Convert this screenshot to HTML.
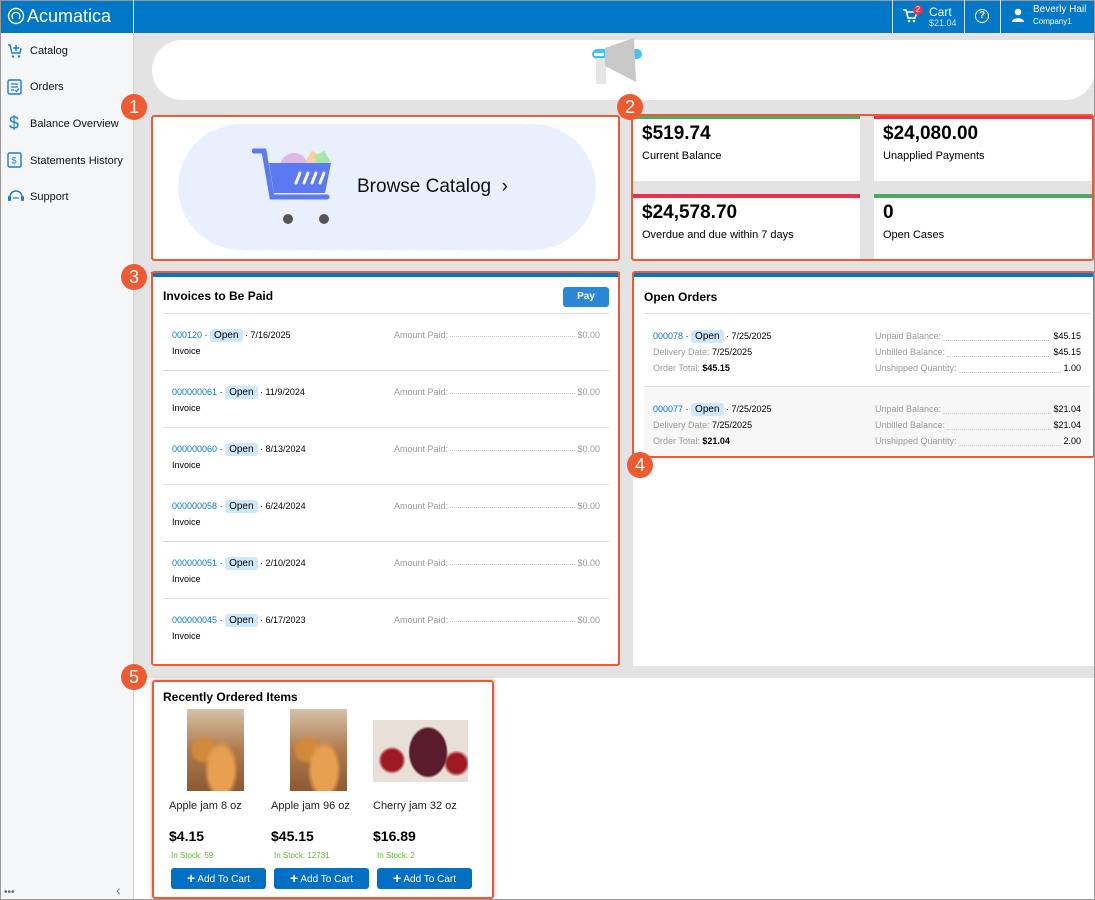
<!DOCTYPE html>
<html><head><meta charset="utf-8"><style>
*{box-sizing:border-box;margin:0;padding:0}
body{width:1095px;height:900px;overflow:hidden;font-family:"Liberation Sans",Arial,sans-serif;background:#fff;position:relative;color:#000}
.a{position:absolute}
.hdr{left:0;top:0;width:1095px;height:33px;background:#0078c8;border:1px solid #999;border-bottom:none}
.side{left:0;top:33px;width:134px;height:867px;background:#f4f6f8;border-right:1px solid #d0d0d0;border-left:1px solid #999;border-bottom:1px solid #999}
.nav{position:absolute;left:29px;font-size:11px;color:#111}
.ic{position:absolute;left:6px}
.main{left:134px;top:33px;width:961px;height:645px;background:#e3e3e3}
.badge{position:absolute;width:26px;height:26px;border-radius:50%;background:#f05a30;color:#fff;font-size:18px;text-align:center;line-height:26px}
.ob{border:2px solid #f05a30;border-radius:3px;position:absolute}
.card{position:absolute;background:#fff;border-top:4px solid;padding:3px 9px}
.card b{font-size:19px;display:block;line-height:24px}
.card span{font-size:11px}
.link{color:#0a76c6}
.pill{display:inline-block;background:#cde8fb;border-radius:3px;padding:0 4px;font-size:10px;line-height:13px;color:#000}
.dots{flex:1;border-bottom:1px dotted #ccc;margin:0 2px 3px}
.lbl{color:#999}
.btn{position:absolute;background:#0070c4;color:#fff;font-size:10px;border-radius:3px;text-align:center}
.ir{position:absolute;width:428px}
.ir .amt{position:absolute;left:222px;top:1px;width:206px;display:flex}
.hl{position:absolute;left:163px;width:446px;height:1px;background:#ddd}
</style></head><body>
<div class="a hdr"></div>
<svg class="a" style="left:7px;top:7px" width="18" height="18"><circle cx="9" cy="9" r="7.5" fill="none" stroke="#fff" stroke-width="1.4"/><path d="M6 12a4 4 0 1 1 6 0" fill="none" stroke="#fff" stroke-width="1.2"/></svg>
<div class="a" style="left:27px;top:6px;color:#fff;font-size:18px">Acumatica</div>
<div class="a" style="left:133px;top:0;width:1px;height:33px;background:#fff"></div>
<div class="a" style="left:892px;top:0;width:1px;height:33px;background:#cfe3f3"></div>
<div class="a" style="left:964px;top:0;width:1px;height:33px;background:#cfe3f3"></div>
<div class="a" style="left:1000px;top:0;width:1px;height:33px;background:#cfe3f3"></div>
<svg class="a" style="left:902px;top:9px" width="16" height="14" viewBox="0 0 16 14"><path d="M1 1h3l2 8h7l2-6H5" fill="none" stroke="#fff" stroke-width="1.6"/><circle cx="7" cy="12" r="1.3" fill="#fff"/><circle cx="12" cy="12" r="1.3" fill="#fff"/></svg>
<div class="a" style="left:913px;top:5px;width:10px;height:10px;border-radius:50%;background:#e8334a;color:#fff;font-size:8px;text-align:center;line-height:10px">2</div>
<div class="a" style="left:929px;top:5px;color:#fff;font-size:12px">Cart</div>
<div class="a" style="left:929px;top:18px;color:#cfe6f7;font-size:9px">$21.04</div>
<div class="a" style="left:975px;top:9px;width:14px;height:14px;border:1.6px solid #fff;border-radius:50%;color:#fff;font-size:10px;font-weight:bold;text-align:center;line-height:11px">?</div>
<svg class="a" style="left:1011px;top:8px" width="14" height="14"><circle cx="7" cy="4" r="3.3" fill="#fff"/><path d="M1 14c0-5 12-5 12 0z" fill="#fff"/></svg>
<div class="a" style="left:1033px;top:4px;color:#fff;font-size:10px">Beverly Hail</div>
<div class="a" style="left:1033px;top:17px;color:#fff;font-size:8px">Company1</div>

<div class="a side">
<svg class="ic" style="top:10px" width="16" height="16" viewBox="0 0 16 16"><path d="M1 2h2l2 8h8l1-5" fill="none" stroke="#1a7fd0" stroke-width="1.4"/><path d="M9 2v6M6 5h6" stroke="#1a7fd0" stroke-width="1.4"/><circle cx="6" cy="13.5" r="1.2" fill="#1a7fd0"/><circle cx="12" cy="13.5" r="1.2" fill="#1a7fd0"/></svg>
<div class="nav" style="top:12px">Catalog</div>
<svg class="ic" style="top:46px" width="15" height="16"><rect x="1" y="1" width="13" height="14" rx="1.5" fill="none" stroke="#1a7fd0" stroke-width="1.4"/><path d="M4 5h7M4 8h7M4 11h3M8 11l1.5 1.5 2.5-3" stroke="#1a7fd0" stroke-width="1.2" fill="none"/></svg>
<div class="nav" style="top:48px">Orders</div>
<div class="ic" style="top:80px;left:8px;color:#1a7fd0;font-size:18px">$</div>
<div class="nav" style="top:85px">Balance Overview</div>
<svg class="ic" style="top:119px" width="15" height="16"><rect x="1" y="1" width="13" height="14" rx="1.5" fill="none" stroke="#1a7fd0" stroke-width="1.4"/><text x="4.5" y="11.5" font-size="9" fill="#1a7fd0" font-family="Liberation Sans">$</text></svg>
<div class="nav" style="top:122px">Statements History</div>
<svg class="ic" style="top:156px" width="18" height="14"><path d="M3 8a6 6 0 0 1 12 0" fill="none" stroke="#1a7fd0" stroke-width="1.4"/><rect x="1" y="7" width="3" height="5" rx="1" fill="#1a7fd0"/><rect x="14" y="7" width="3" height="5" rx="1" fill="#1a7fd0"/><circle cx="7" cy="9" r=".9" fill="#1a7fd0"/><circle cx="9" cy="9" r=".9" fill="#1a7fd0"/><circle cx="11" cy="9" r=".9" fill="#1a7fd0"/></svg>
<div class="nav" style="top:158px">Support</div>
<div class="a" style="left:3px;top:854px;color:#666;font-size:10px">•••</div>
<div class="a" style="left:115px;top:849px;color:#777;font-size:14px">‹</div>
</div>

<div class="a main"></div>
<div class="a" style="left:152px;top:40px;width:943px;height:60px;background:#fff;border-radius:30px 0 30px 30px"></div>
<svg class="a" style="left:590px;top:38px" width="56" height="48"><rect x="2" y="11" width="50" height="10" rx="5" fill="#3ec4f5"/><rect x="4" y="15" width="10" height="3" fill="#fff"/><rect x="6" y="20" width="10" height="26" fill="#e6e6e6"/><path d="M15 10 L44 0 L46 44 L15 28z" fill="#c8c8c8"/></svg>

<div class="a" style="left:151px;top:115px;width:469px;height:146px;background:#fff"></div>
<svg class="a" style="left:175px;top:121px" width="424" height="132" viewBox="0 0 424 132"><defs><pattern id="w" width="12" height="12" patternUnits="userSpaceOnUse"></pattern></defs>
<rect x="6" y="6" width="412" height="120" rx="60" fill="#e9effc" stroke="#e9effc" stroke-width="6" stroke-dasharray="5 4" stroke-linecap="round"/></svg>
<svg class="a" style="left:252px;top:147px" width="90" height="80"><circle cx="42" cy="20" r="14" fill="#e0b8e8"/><rect x="56" y="6" width="12" height="12" fill="#f9cf9b" transform="rotate(30 62 12)"/><rect x="64" y="6" width="12" height="12" fill="#a6e6a6" transform="rotate(-30 70 12)"/><path d="M2 4h10l8 46h55" fill="none" stroke="#5a79f2" stroke-width="5" stroke-linecap="round"/><path d="M17 16h62l-6 30H22z" fill="#5a79f2"/><path d="M44 36l4-10M52 36l4-10M60 36l4-10M68 36l4-10" stroke="#fff" stroke-width="3" stroke-linecap="round"/><circle cx="36" cy="72" r="5" fill="#555"/><circle cx="72" cy="72" r="5" fill="#555"/></svg>
<div class="a" style="left:357px;top:176px;font-size:19px;color:#111">Browse Catalog &nbsp;›</div>
<div class="ob" style="left:151px;top:115px;width:469px;height:146px"></div>

<div class="card" style="left:633px;top:115px;width:227px;height:66px;border-color:#4caa5e"><b>$519.74</b><span>Current Balance</span></div>
<div class="card" style="left:874px;top:115px;width:219px;height:66px;border-color:#e8334a"><b>$24,080.00</b><span>Unapplied Payments</span></div>
<div class="card" style="left:633px;top:194px;width:227px;height:66px;border-color:#e8334a"><b>$24,578.70</b><span>Overdue and due within 7 days</span></div>
<div class="card" style="left:874px;top:194px;width:219px;height:66px;border-color:#4caa5e"><b>0</b><span>Open Cases</span></div>
<div class="ob" style="left:631px;top:114px;width:463px;height:147px"></div>

<div class="a" style="left:151px;top:272px;width:469px;height:394px;background:#fff;border-top:5px solid #0078c8"></div>
<div class="a" style="left:163px;top:289px;font-size:12px;font-weight:bold">Invoices to Be Paid</div>
<div class="btn" style="left:563px;top:287px;width:46px;height:20px;line-height:20px;font-weight:bold;background:#2a86d6">Pay</div>
<div class="hl" style="top:313px"></div>
<div class="hl" style="top:370px"></div>
<div class="hl" style="top:427px"></div>
<div class="hl" style="top:484px"></div>
<div class="hl" style="top:541px"></div>
<div class="hl" style="top:598px"></div>
<div class="a" style="left:172px;top:329px;width:428px;font-size:9px">
 <div class="ir" style="top:0"><span class="link">000120</span> · <span class="pill">Open</span> · 7/16/2025<div style="margin-top:4px">Invoice</div><div class="amt lbl">Amount Paid:<span class="dots"></span>$0.00</div></div>
 <div class="ir" style="top:57px"><span class="link">000000061</span> · <span class="pill">Open</span> · 11/9/2024<div style="margin-top:4px">Invoice</div><div class="amt lbl">Amount Paid:<span class="dots"></span>$0.00</div></div>
 <div class="ir" style="top:114px"><span class="link">000000060</span> · <span class="pill">Open</span> · 8/13/2024<div style="margin-top:4px">Invoice</div><div class="amt lbl">Amount Paid:<span class="dots"></span>$0.00</div></div>
 <div class="ir" style="top:171px"><span class="link">000000058</span> · <span class="pill">Open</span> · 6/24/2024<div style="margin-top:4px">Invoice</div><div class="amt lbl">Amount Paid:<span class="dots"></span>$0.00</div></div>
 <div class="ir" style="top:228px"><span class="link">000000051</span> · <span class="pill">Open</span> · 2/10/2024<div style="margin-top:4px">Invoice</div><div class="amt lbl">Amount Paid:<span class="dots"></span>$0.00</div></div>
 <div class="ir" style="top:285px"><span class="link">000000045</span> · <span class="pill">Open</span> · 6/17/2023<div style="margin-top:4px">Invoice</div><div class="amt lbl">Amount Paid:<span class="dots"></span>$0.00</div></div>
</div>
<div class="ob" style="left:151px;top:271px;width:469px;height:395px"></div>

<div class="a" style="left:633px;top:272px;width:461px;height:394px;background:#fff;border-top:5px solid #0078c8"></div>
<div class="a" style="left:644px;top:290px;font-size:12px;font-weight:bold">Open Orders</div>
<div class="a" style="left:644px;top:313px;width:446px;height:1px;background:#ddd"></div>
<div class="a" style="left:644px;top:386px;width:446px;height:70px;background:#f7f7f7;border-top:1px solid #ddd"></div>
<div class="a" style="left:653px;top:328px;font-size:9px;line-height:16px">
 <div><span class="link">000078</span> · <span class="pill">Open</span> · 7/25/2025</div>
 <div><span class="lbl">Delivery Date:</span> 7/25/2025</div>
 <div><span class="lbl">Order Total:</span> <b>$45.15</b></div>
</div>
<div class="a" style="left:875px;top:328px;width:206px;font-size:9px;line-height:16px">
 <div style="display:flex"><span class="lbl">Unpaid Balance:</span><span class="dots"></span>$45.15</div>
 <div style="display:flex"><span class="lbl">Unbilled Balance:</span><span class="dots"></span>$45.15</div>
 <div style="display:flex"><span class="lbl">Unshipped Quantity:</span><span class="dots"></span>1.00</div>
</div>
<div class="a" style="left:653px;top:401px;font-size:9px;line-height:16px">
 <div><span class="link">000077</span> · <span class="pill">Open</span> · 7/25/2025</div>
 <div><span class="lbl">Delivery Date:</span> 7/25/2025</div>
 <div><span class="lbl">Order Total:</span> <b>$21.04</b></div>
</div>
<div class="a" style="left:875px;top:401px;width:206px;font-size:9px;line-height:16px">
 <div style="display:flex"><span class="lbl">Unpaid Balance:</span><span class="dots"></span>$21.04</div>
 <div style="display:flex"><span class="lbl">Unbilled Balance:</span><span class="dots"></span>$21.04</div>
 <div style="display:flex"><span class="lbl">Unshipped Quantity:</span><span class="dots"></span>2.00</div>
</div>
<div class="ob" style="left:632px;top:271px;width:463px;height:187px"></div>

<div class="a" style="left:152px;top:680px;width:342px;height:219px;background:#fff;box-shadow:0 0 4px #aaa"></div>
<div class="a" style="left:163px;top:690px;font-size:12px;font-weight:bold">Recently Ordered Items</div>
<div class="a" style="left:187px;top:709px;width:57px;height:82px;background:radial-gradient(ellipse at 60% 75%,#e8a050 0 25%,transparent 35%),radial-gradient(circle at 30% 50%,#d08a3a 0 18%,transparent 25%),linear-gradient(180deg,#d5c2aa 0%,#b07a4c 50%,#8c5a33 100%)"></div>
<div class="a" style="left:290px;top:709px;width:57px;height:82px;background:radial-gradient(ellipse at 60% 75%,#e8a050 0 25%,transparent 35%),radial-gradient(circle at 30% 50%,#d08a3a 0 18%,transparent 25%),linear-gradient(180deg,#d5c2aa 0%,#b07a4c 50%,#8c5a33 100%)"></div>
<div class="a" style="left:373px;top:720px;width:95px;height:62px;background:radial-gradient(ellipse 20px 26px at 58% 52%,#5a1c2c 0 90%,transparent 100%),radial-gradient(circle at 20% 65%,#a01822 0 12%,transparent 16%),radial-gradient(circle at 88% 70%,#a01822 0 10%,transparent 14%),#e8e0d8"></div>
<div class="a" style="left:169px;top:800px;font-size:11px;color:#222">Apple jam 8 oz</div>
<div class="a" style="left:271px;top:800px;font-size:11px;color:#222">Apple jam 96 oz</div>
<div class="a" style="left:373px;top:800px;font-size:11px;color:#222">Cherry jam 32 oz</div>
<div class="a" style="left:169px;top:828px;font-size:14px;font-weight:bold">$4.15</div>
<div class="a" style="left:271px;top:828px;font-size:14px;font-weight:bold">$45.15</div>
<div class="a" style="left:373px;top:828px;font-size:14px;font-weight:bold">$16.89</div>
<div class="a" style="left:171px;top:851px;font-size:8px;color:#5cb82e">In Stock: 59</div>
<div class="a" style="left:274px;top:851px;font-size:8px;color:#5cb82e">In Stock: 12731</div>
<div class="a" style="left:377px;top:851px;font-size:8px;color:#5cb82e">In Stock: 2</div>
<div class="btn" style="left:171px;top:868px;width:95px;height:21px;line-height:21px"><b style="font-size:14px;vertical-align:-1px">+</b> Add To Cart</div>
<div class="btn" style="left:274px;top:868px;width:95px;height:21px;line-height:21px"><b style="font-size:14px;vertical-align:-1px">+</b> Add To Cart</div>
<div class="btn" style="left:377px;top:868px;width:95px;height:21px;line-height:21px"><b style="font-size:14px;vertical-align:-1px">+</b> Add To Cart</div>
<div class="ob" style="left:152px;top:680px;width:342px;height:219px"></div>

<div class="badge" style="left:121px;top:94px">1</div>
<div class="badge" style="left:617px;top:94px">2</div>
<div class="badge" style="left:121px;top:264px">3</div>
<div class="badge" style="left:627px;top:452px">4</div>
<div class="badge" style="left:121px;top:664px">5</div>

<div class="a" style="left:1094px;top:0;width:1px;height:900px;background:#999"></div>
<div class="a" style="left:0;top:899px;width:1095px;height:1px;background:#999"></div>
</body></html>
